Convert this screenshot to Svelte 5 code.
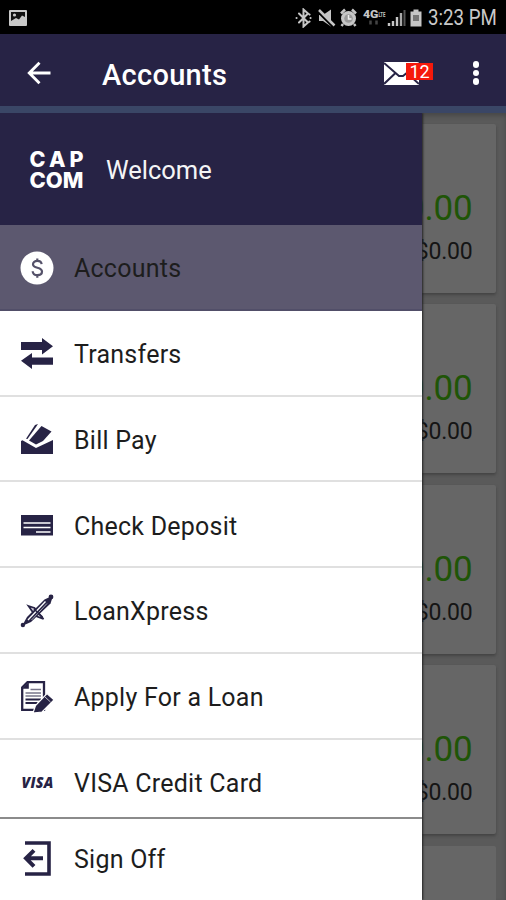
<script lang="ts">
	interface MenuItem {
		icon: string;
		label: string;
	}

	const items: MenuItem[] = [
		{ icon: 'accounts', label: 'Accounts' },
		{ icon: 'transfers', label: 'Transfers' },
		{ icon: 'billpay', label: 'Bill Pay' },
		{ icon: 'check', label: 'Check Deposit' },
		{ icon: 'express', label: 'LoanXpress' },
		{ icon: 'apply', label: 'Apply For a Loan' },
		{ icon: 'visa', label: 'VISA Credit Card' }
	];

	const accounts = [
		{ balance: '$0.00', available: '$0.00' },
		{ balance: '$0.00', available: '$0.00' },
		{ balance: '$0.00', available: '$0.00' },
		{ balance: '$0.00', available: '$0.00' }
	];

	let active = $state('accounts');
	let unread = $state(12);
</script>

{#snippet icon(name: string)}
	<svg class="icon" width="36" height="36" viewBox="0 0 36 36">
		{#if name === 'accounts'}
			<circle cx="18" cy="18" r="16.5" fill="#fff" />
			<path
				d="M22.6 14.2c-.2-2.1-1.9-3.3-4.3-3.3-2.5 0-4.3 1.3-4.3 3.3 0 4.8 9 2.3 9 7.3 0 2.2-1.9 3.6-4.5 3.6-2.8 0-4.7-1.4-4.8-3.9M18.3 8.6v2.5M18.3 25v2.7"
				fill="none"
				stroke="#55526a"
				stroke-width="2.2"
			/>
		{:else if name === 'transfers'}
			<path d="M2 6h21V2l11 8.2L23 18.5V14H2zM34 21.5H13V17L2 24.800 13 33v-4.200h21z" />
		{:else if name === 'billpay'}
			<path d="M2 20l1.500-.8L17 27l17-8v14H2z" />
			<path d="M7 17.800L16 4l3-1-2 3L8.500 18z" />
			<path d="M10 19.500L22.500 5l10 5.500L24 20l-7 3.500z" />
		{:else if name === 'check'}
			<path d="M2 8h32v20.500H2z" />
			<path d="M4.500 16h27M4.500 20.500h27M17 25h14.500" stroke="#fff" stroke-width="1.500" />
		{:else if name === 'express'}
			<path d="M9.500 13l6 2 3 4 6 7-6.500-2.500-4-4z" fill="#d5d4dc" stroke="#272345" stroke-width="1.800" />
			<path d="M3 33l5-9L25.500 6.500 34 2.500l-2.500 8L12 29z" />
			<path d="M9 27L26.500 8.500" stroke="#fff" stroke-width="1.300" />
			<path d="M12.500 27L28 10.500" stroke="#aaa8b6" stroke-width="1" />
			<path d="M15 16l8.500 8" stroke="#272345" stroke-width="1.600" />
			<circle cx="3.900" cy="32" r="2.200" />
			<circle cx="32" cy="4" r="2.400" />
		{:else if name === 'apply'}
			<path
				d="M8.500 3.200H25v27.600H3.200V8.500z"
				fill="#fff"
				stroke="#272345"
				stroke-width="2.300"
			/>
			<path d="M3 9.800h6.800V3z" />
			<path d="M11.500 10.500h10.500M6.500 14h15.500M6.500 17h15.500" stroke="#77758a" stroke-width="1.500" />
			<path d="M6.500 20.500h15.500M6.500 24h12" stroke="#272345" stroke-width="2" />
			<path d="M14 34l2.500-7.500L28 14.500l7 6.300L23 33z" stroke="#fff" stroke-width="1.200" />
			<path d="M26 18l5.500 5" stroke="#fff" stroke-width=".7" />
		{:else if name === 'visa'}
			<text x="2.500" y="23.500" class="visa" textLength="32" lengthAdjust="spacingAndGlyphs">VISA</text>
		{:else if name === 'signoff'}
			<path d="M6 3h24v31H6" fill="none" stroke="#272345" stroke-width="3.600" />
			<path
				d="M24 18.300H8M15 10.300l-8 8 8 8"
				fill="none"
				stroke="#272345"
				stroke-width="4"
			/>
		{/if}
	</svg>
{/snippet}

<div class="phone">
	<div class="status-bar">
		<svg width="18" height="16" viewBox="0 0 18 16">
			<rect width="18" height="16" rx="1" fill="#c9c9c9" />
			<path d="M2 2h14v5l-3-1.500-3 4-3-1.500-5 3z" fill="#111" />
			<circle cx="5.500" cy="5" r="1.600" fill="#c9c9c9" />
		</svg>
		<span class="spacer"></span>
		<svg class="indicators" width="130" height="20" viewBox="0 0 130 20" fill="#c6c6c6">
			<path
				d="M4 5.500l9 9-4.500 4V1.500l4.500 4-9 9M1.500 10h.1M15.500 10h.1M14.500 6.500l.1.1M14.500 13.500l.1.1"
				fill="none"
				stroke="#c6c6c6"
				stroke-width="2"
				stroke-linecap="round"
			/>
			<path d="M24 7h4l8-5.500v17L28 13h-4z" />
			<path d="M23 4l16 16" stroke="#000" stroke-width="2" />
			<path d="M24 2l15.500 15.500" stroke="#c6c6c6" stroke-width="2.500" />
			<circle cx="53.500" cy="10.500" r="7.500" />
			<path d="M46 5.500l4-4M61 5.500l-4-4M48 16l-1.500 2M59 16l1.500 2" stroke="#c6c6c6" stroke-width="2.500" />
			<circle cx="53.500" cy="10.500" r="4.300" fill="#999" />
			<path d="M53.500 7v4h3" fill="none" stroke="#eee" stroke-width="1.500" />
			<text x="68" y="9.500" class="network" textLength="15.500" lengthAdjust="spacingAndGlyphs">4G</text>
			<text x="83.500" y="8.500" class="lte" textLength="7" lengthAdjust="spacingAndGlyphs">LTE</text>
			<path d="M75.500 12.500v4M81.500 12.500v4" stroke="#444" stroke-width="2.500" />
			<path d="M94 15v3M98 13v5M102 9v9" stroke="#c6c6c6" stroke-width="2.400" />
			<path d="M106 5v13" stroke="#aaa" stroke-width="2.400" />
			<path d="M109.500 2v16" stroke="#555" stroke-width="2" />
			<path d="M115.500 3.500h3V1.500h5v2h3v15h-11z" />
			<path d="M118 7h6v6h-6z" fill="#777" />
		</svg>
		<span class="clock">3:23 PM</span>
	</div>

	<header class="app-bar">
		<button class="back" aria-label="Back">
			<svg width="24" height="24" viewBox="0 0 24 24">
				<path
					d="M23.500 12H2.500M12.500 1.800L2.300 12l10.200 10.200"
					fill="none"
					stroke="#fff"
					stroke-width="2.900"
				/>
			</svg>
		</button>
		<h1>Accounts</h1>
		<button class="mail" aria-label="Messages">
			<svg width="35" height="23" viewBox="0 0 35 23">
				<path d="M0 0h35v23H0z" fill="#fff" />
				<path
					d="M0 1l15 13h4L35 1M0 22l11.500-11M35 22L23 11"
					fill="none"
					stroke="#272345"
					stroke-width="2"
				/>
			</svg>
			<span class="badge">{unread}</span>
		</button>
		<button class="more" aria-label="More options">
			<i></i><i></i><i></i>
		</button>
	</header>

	<main>
		<div class="cards">
			{#each accounts as account}
				<section class="card">
					<p class="balance">{account.balance}</p>
					<p class="available">{account.available}</p>
				</section>
			{/each}
			<section class="card last"></section>
		</div>

		<nav class="drawer">
			<div class="drawer-header">
				<svg class="logo" width="56" height="40" viewBox="0 0 56 40">
					<text x="0.500" y="17" textLength="54" lengthAdjust="spacing">CAP</text>
					<text x="0.500" y="37.500" textLength="54" lengthAdjust="spacingAndGlyphs">COM</text>
				</svg>
				<span>Welcome</span>
			</div>
			<div class="menu">
				{#each items as item}
					<button
						class="row"
						class:active={active === item.icon}
						onclick={() => (active = item.icon)}
					>
						{@render icon(item.icon)}
						<span>{item.label}</span>
					</button>
				{/each}
			</div>
			<button class="row sign-off">
				{@render icon('signoff')}
				<span>Sign Off</span>
			</button>
		</nav>
	</main>
</div>

<style>
	:global(body) {
		margin: 0;
	}

	.phone {
		display: flex;
		flex-direction: column;
		width: 506px;
		height: 900px;
		overflow: hidden;
		font-family: Roboto, 'Liberation Sans', sans-serif;
	}

	button {
		border: none;
		background: none;
		padding: 0;
		font-family: inherit;
	}

	.status-bar {
		display: flex;
		align-items: center;
		box-sizing: border-box;
		height: 34px;
		padding: 1px 9px 0;
		background: #000;
		flex-shrink: 0;
	}

	.spacer {
		flex: 1;
	}

	.indicators {
		flex-shrink: 0;
	}

	.network {
		font-size: 11.5px;
		font-weight: 900;
	}

	.lte {
		font-size: 7px;
		font-weight: 700;
	}

	.clock {
		width: 69px;
		margin-left: 3px;
		font-size: 22px;
		line-height: 36px;
		color: #c9c9c9;
		white-space: nowrap;
		transform: scaleX(0.85);
		transform-origin: left;
	}

	.app-bar {
		display: flex;
		align-items: center;
		box-sizing: border-box;
		height: 79px;
		padding: 0 20px 0 27px;
		background: #272345;
		border-bottom: 7px solid #3a4666;
		flex-shrink: 0;
	}

	.back {
		display: flex;
		width: 75px;
		padding-top: 6px;
	}

	h1 {
		flex: 1;
		margin: 0;
		padding-top: 10px;
		font-size: 29px;
		font-weight: 500;
		letter-spacing: 0.3px;
		color: #fff;
	}

	.mail {
		position: relative;
		display: flex;
		margin: 7px 33px 0 0;
		padding-right: 14px;
	}

	.badge {
		position: absolute;
		top: 1px;
		right: 0;
		width: 27px;
		height: 17px;
		background: #f5190b;
		font-size: 18px;
		line-height: 18px;
		color: #fff;
	}

	.more {
		display: flex;
		flex-direction: column;
		align-items: center;
		gap: 2px;
		width: 20px;
		padding-top: 6px;
	}

	.more i {
		width: 6.5px;
		height: 6.5px;
		border-radius: 50%;
		background: #fff;
	}

	main {
		position: relative;
		flex: 1;
		background: #5a5a5a;
		box-shadow: inset 0 3px 4px #484848;
		overflow: hidden;
	}

	.cards {
		display: flex;
		flex-direction: column;
		gap: 11.4px;
		padding: 11px 10.5px 0;
	}

	.card {
		box-sizing: border-box;
		height: 169px;
		padding: 63px 23px 0;
		border-radius: 2px;
		background: #666;
		box-shadow: 0 2px 3px #444;
		text-align: right;
	}

	.card.last {
		height: 44px;
		box-shadow: none;
	}

	.card p {
		margin: 0;
	}

	.balance {
		font-size: 35px;
		line-height: 44px;
		letter-spacing: -0.2px;
		color: #1f5507;
	}

	.available {
		font-size: 23px;
		line-height: 42px;
		letter-spacing: -0.2px;
		color: #151515;
	}

	.drawer {
		position: absolute;
		top: 0;
		left: 0;
		display: flex;
		flex-direction: column;
		width: 422px;
		height: 100%;
		background: #fff;
		box-shadow: 1px 0 2px #222;
	}

	.drawer-header {
		display: flex;
		align-items: center;
		box-sizing: border-box;
		height: 112px;
		padding: 2px 0 0 29px;
		background: #272345;
		color: #f4f4f6;
		flex-shrink: 0;
	}

	.drawer-header span {
		font-size: 25.5px;
	}

	.logo {
		margin-right: 21px;
		overflow: visible;
	}

	.logo text {
		fill: #fff;
		font-family: Inter, sans-serif;
		font-size: 21.5px;
		font-weight: 800;
	}

	.menu {
		height: 591.5px;
		overflow: hidden;
		flex-shrink: 0;
	}

	.row {
		display: flex;
		align-items: center;
		box-sizing: border-box;
		width: 100%;
		height: 85.75px;
		padding: 2px 0 0 19px;
		border-bottom: 2px solid #e0e0e0;
		font-size: 25px;
		letter-spacing: 0.24px;
		color: #1d1d1d;
		text-align: left;
	}

	.row.active {
		background: #5c586f;
		border-bottom-color: #514e68;
	}

	.row span {
		padding-top: 2px;
	}

	.icon {
		width: 36px;
		margin-right: 19px;
		fill: #272345;
		overflow: visible;
		flex-shrink: 0;
	}

	.visa {
		font-family: 'Open Sans', sans-serif;
		font-size: 15px;
		font-style: italic;
		font-weight: 800;
	}

	.sign-off {
		flex: 1;
		padding: 0 0 2px 19px;
		border-top: 2px solid #8b8b8b;
		border-bottom: none;
	}
</style>
